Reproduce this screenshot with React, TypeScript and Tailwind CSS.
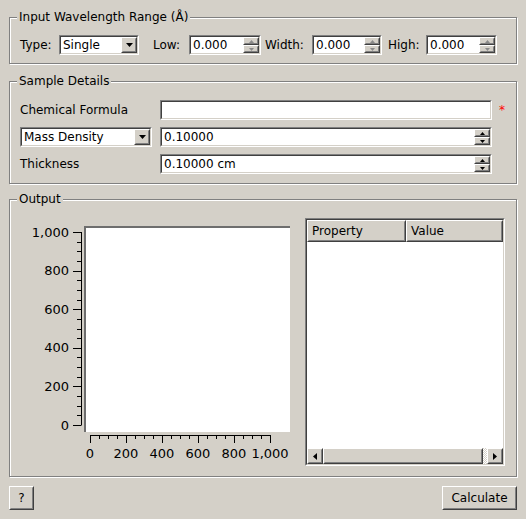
import React from "react";

const font = "font-['DejaVu_Sans',sans-serif]";

function Sunken({ className = "", children }: { className?: string; children?: React.ReactNode }) {
  return (
    <div className={`border border-t-[#808080] border-l-[#808080] border-r-white border-b-white ${className}`}>
      <div className="relative flex h-full items-center border border-t-[#404040] border-l-[#404040] border-r-[#d4d0c8] border-b-[#d4d0c8] bg-white">
        {children}
      </div>
    </div>
  );
}

function Raised({ className = "", children }: { className?: string; children?: React.ReactNode }) {
  return (
    <div className={`border border-t-white border-l-white border-r-[#404040] border-b-[#404040] bg-[#d4d0c8] ${className}`}>
      <div className="flex h-full w-full items-center justify-center border border-t-[#d4d0c8] border-l-[#d4d0c8] border-r-[#808080] border-b-[#808080]">
        {children}
      </div>
    </div>
  );
}

function Arrow({ dir, size = 7, color = "#000" }: { dir: "up" | "down" | "left" | "right"; size?: number; color?: string }) {
  const h = Math.ceil(size / 2);
  const pts =
    dir === "down"
      ? `0,0 ${size},0 ${size / 2},${h}`
      : dir === "up"
      ? `0,${h} ${size},${h} ${size / 2},0`
      : dir === "left"
      ? `${h},0 ${h},${size} 0,${size / 2}`
      : `0,0 0,${size} ${h},${size / 2}`;
  const w = dir === "up" || dir === "down" ? size : h;
  const hh = dir === "up" || dir === "down" ? h : size;
  return (
    <svg width={w} height={hh} viewBox={`0 0 ${w} ${hh}`} className="block">
      <polygon points={pts} fill={color} />
    </svg>
  );
}

function Combo({ text, className = "" }: { text: string; className?: string }) {
  return (
    <Sunken className={`h-[20px] ${className}`}>
      <span className="flex-1 pl-[2px] leading-[16px]">{text}</span>
      <Raised className="h-[16px] w-[16px]">
        <Arrow dir="down" size={7} />
      </Raised>
    </Sunken>
  );
}

function Spin({ value, className = "", dim = false }: { value: string; className?: string; dim?: boolean }) {
  const c = dim ? "#8a8a8a" : "#000";
  return (
    <Sunken className={`h-[20px] ${className}`}>
      <span className="flex-1 pl-[2px] leading-[16px]">{value}</span>
      <div className="flex h-[16px] w-[16px] flex-col">
        <Raised className="h-[8px] w-[16px]">
          <Arrow dir="up" size={5} color={c} />
        </Raised>
        <Raised className="h-[8px] w-[16px]">
          <Arrow dir="down" size={5} color={c} />
        </Raised>
      </div>
    </Sunken>
  );
}

function Group({ title, className = "", children }: { title: string; className?: string; children: React.ReactNode }) {
  return (
    <fieldset
      className={`border border-[#808080] px-[10px] shadow-[inset_1px_1px_0_#fff,1px_1px_0_#fff] ${className}`}
    >
      <legend className="-ml-[3px] bg-[#d4d0c8] px-[2px] leading-[16px]">{title}</legend>
      {children}
    </fieldset>
  );
}

function Plot() {
  const ys: React.ReactNode[] = [];
  const xs: React.ReactNode[] = [];
  for (let v = 0; v <= 1000; v += 50) {
    const major = v % 200 === 0;
    const y = Math.round(207 - (v * 193) / 1000) + 0.5;
    ys.push(<line key={`y${v}`} x1={major ? 53 : 57} x2={61} y1={y} y2={y} stroke="#000" />);
    const x = Math.round(70 + (v * 180) / 1000) + 0.5;
    xs.push(<line key={`x${v}`} x1={x} x2={x} y1={217} y2={major ? 225 : 221} stroke="#000" />);
  }
  const labels = [0, 200, 400, 600, 800, 1000];
  return (
    <svg width={280} height={248} className="block shrink-0">
      <rect x={64} y={8} width={206} height={206} fill="#fff" />
      <rect x={64} y={8} width={206} height={2} fill="#6e6e6e" />
      <rect x={64} y={8} width={2} height={206} fill="#6e6e6e" />
      <line x1={61.5} x2={61.5} y1={14} y2={207.5} stroke="#000" />
      <line x1={70} x2={250.5} y1={217.5} y2={217.5} stroke="#000" />
      {ys}
      {xs}
      {labels.map((v) => (
        <text
          key={`ly${v}`}
          x={49}
          y={207 - (v * 193) / 1000 + 4.5}
          textAnchor="end"
          fill="#000"
          className={`${font} text-[13px]`}
        >
          {v.toLocaleString("en-US")}
        </text>
      ))}
      {labels.map((v) => (
        <text
          key={`lx${v}`}
          x={70 + (v * 180) / 1000}
          y={240}
          textAnchor="middle"
          fill="#000"
          className={`${font} text-[13px]`}
        >
          {v.toLocaleString("en-US")}
        </text>
      ))}
    </svg>
  );
}

function Table() {
  return (
    <Sunken className="ml-[5px] h-[248px] w-[200px]">
      <div className="flex h-full w-full flex-col">
        <div className="flex h-[22px]">
          <Raised className="w-[99px]">
            <span className="w-full pl-[3px] leading-[16px]">Property</span>
          </Raised>
          <Raised className="flex-1">
            <span className="w-full pl-[3px] leading-[16px]">Value</span>
          </Raised>
        </div>
        <div className="flex-1 bg-white" />
        <div className="flex h-[16px] bg-[#d4d0c8]">
          <Raised className="h-[16px] w-[16px]">
            <Arrow dir="left" size={7} />
          </Raised>
          <Raised className="h-[16px] flex-1" />
          <div className="h-[16px] w-[4px] bg-[image:repeating-conic-gradient(#fff_0_25%,#d4d0c8_0_50%)] bg-[length:2px_2px]" />
          <Raised className="h-[16px] w-[16px]">
            <Arrow dir="right" size={7} />
          </Raised>
        </div>
      </div>
    </Sunken>
  );
}

export default function App() {
  return (
    <div className={`${font} h-[519px] w-[526px] overflow-hidden bg-[#d4d0c8] px-[9px] pt-[9px] text-[12px] text-black`}>
      {/* Input Wavelength Range */}
      <Group title="Input Wavelength Range (Å)" className="pb-[8px]">
        <div className="flex items-center pt-[10px]">
          <span className="w-[39px]">Type:</span>
          <Combo text="Single" className="w-[80px]" />
          <span className="ml-[14px] w-[36px]">Low:</span>
          <Spin value="0.000" className="w-[72px]" dim />
          <span className="ml-[4px] w-[47px]">Width:</span>
          <Spin value="0.000" className="w-[70px]" dim />
          <span className="ml-[6px] w-[38px]">High:</span>
          <Spin value="0.000" className="w-[71px]" dim />
        </div>
      </Group>

      {/* Sample Details */}
      <Group title="Sample Details" className="mt-[9px] pb-[9px]">
        <div className="flex flex-col gap-[7px] pt-[11px]">
          <div className="flex h-[20px] items-center">
            <span className="w-[140px]">Chemical Formula</span>
            <Sunken className="h-[20px] w-[332px]" />
            <span className="ml-[7px] text-[#ff0000]">*</span>
          </div>
          <div className="flex h-[20px] items-center">
            <Combo text="Mass Density" className="w-[132px]" />
            <Spin value="0.10000" className="ml-[8px] w-[332px]" />
          </div>
          <div className="flex h-[20px] items-center">
            <span className="w-[140px]">Thickness</span>
            <Spin value="0.10000 cm" className="w-[332px]" />
          </div>
        </div>
      </Group>

      {/* Output */}
      <Group title="Output" className="mt-[7px] pb-[10px]">
        <div className="flex pt-[11px]">
          <Plot />
          <Table />
        </div>
      </Group>

      <div className="mt-[9px] flex justify-between">
        <Raised className="h-[24px] w-[25px]">?</Raised>
        <Raised className="h-[24px] w-[75px]">Calculate</Raised>
      </div>
    </div>
  );
}
